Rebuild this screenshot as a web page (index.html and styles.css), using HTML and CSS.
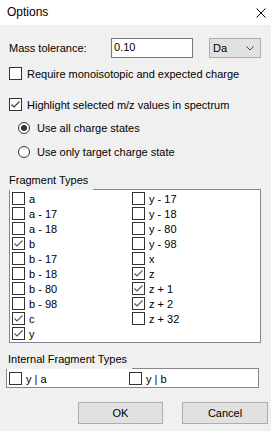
FILE: index.html
```html
<!DOCTYPE html>
<html>
<head>
<meta charset="utf-8">
<link rel="stylesheet" href="styles.css">
</head>
<body>
<div class="window">
  <div class="titlebar">
    <span class="title">Options</span>
    <svg class="close" width="10" height="10" viewBox="0 0 10 10"><path d="M0.5 0.5 L9.5 9.5 M9.5 0.5 L0.5 9.5" stroke="#000" stroke-width="1" fill="none"/></svg>
  </div>
  <div class="content">
    <div class="mass-row">
      <span class="mass-label">Mass tolerance:</span>
      <div class="textbox">0.10</div>
      <div class="combo"><span>Da</span><svg width="8" height="5" viewBox="0 0 8 5"><path d="M0.5 0.5 L4 4 L7.5 0.5" stroke="#444" fill="none"/></svg></div>
    </div>
    <div class="opt-row require"><span class="cb"></span><span>Require monoisotopic and expected charge</span></div>
    <div class="opt-row highlight"><span class="cb on"><svg width="11" height="11" viewBox="0 0 11 11"><path d="M1.5 5.5 L4 8 L9.5 2.5" stroke="#333" stroke-width="1.2" fill="none"/></svg></span><span>Highlight selected m/z values in spectrum</span></div>
    <div class="radio-row r1"><span class="rb on"></span><span>Use all charge states</span></div>
    <div class="radio-row r2"><span class="rb"></span><span>Use only target charge state</span></div>

    <div class="group frag">
      <div class="group-head"><span class="group-label">Fragment Types</span><span class="group-line"></span></div>
      <div class="group-box frag-list">
        <div class="item"><span class="cb"></span>a</div>
        <div class="item"><span class="cb"></span>a - 17</div>
        <div class="item"><span class="cb"></span>a - 18</div>
        <div class="item"><span class="cb on"><svg width="11" height="11" viewBox="0 0 11 11"><path d="M1.5 5.5 L4 8 L9.5 2.5" stroke="#555" stroke-width="1.1" fill="none"/></svg></span>b</div>
        <div class="item"><span class="cb"></span>b - 17</div>
        <div class="item"><span class="cb"></span>b - 18</div>
        <div class="item"><span class="cb"></span>b - 80</div>
        <div class="item"><span class="cb"></span>b - 98</div>
        <div class="item"><span class="cb on"><svg width="11" height="11" viewBox="0 0 11 11"><path d="M1.5 5.5 L4 8 L9.5 2.5" stroke="#555" stroke-width="1.1" fill="none"/></svg></span>c</div>
        <div class="item"><span class="cb on"><svg width="11" height="11" viewBox="0 0 11 11"><path d="M1.5 5.5 L4 8 L9.5 2.5" stroke="#555" stroke-width="1.1" fill="none"/></svg></span>y</div>
        <div class="item"><span class="cb"></span>y - 17</div>
        <div class="item"><span class="cb"></span>y - 18</div>
        <div class="item"><span class="cb"></span>y - 80</div>
        <div class="item"><span class="cb"></span>y - 98</div>
        <div class="item"><span class="cb"></span>x</div>
        <div class="item"><span class="cb on"><svg width="11" height="11" viewBox="0 0 11 11"><path d="M1.5 5.5 L4 8 L9.5 2.5" stroke="#555" stroke-width="1.1" fill="none"/></svg></span>z</div>
        <div class="item"><span class="cb on"><svg width="11" height="11" viewBox="0 0 11 11"><path d="M1.5 5.5 L4 8 L9.5 2.5" stroke="#555" stroke-width="1.1" fill="none"/></svg></span>z + 1</div>
        <div class="item"><span class="cb on"><svg width="11" height="11" viewBox="0 0 11 11"><path d="M1.5 5.5 L4 8 L9.5 2.5" stroke="#555" stroke-width="1.1" fill="none"/></svg></span>z + 2</div>
        <div class="item"><span class="cb"></span>z + 32</div>
      </div>
    </div>

    <div class="group internal">
      <div class="group-head"><span class="group-label">Internal Fragment Types</span><span class="group-line"></span></div>
      <div class="group-box internal-list">
        <div class="item"><span class="cb"></span>y | a</div>
        <div class="item"><span class="cb"></span>y | b</div>
      </div>
    </div>

    <div class="buttons">
      <div class="btn ok">OK</div>
      <div class="btn cancel">Cancel</div>
    </div>
  </div>
</div>
</body>
</html>
```

FILE: styles.css
```css
html, body {
  margin: 0;
  padding: 0;
}
body {
  width: 271px;
  height: 431px;
  background: #f0f0f0;
  font-family: "Liberation Sans", Arial, sans-serif;
  font-size: 11px;
  color: #000;
  overflow: hidden;
}
.window {
  width: 271px;
  height: 431px;
  display: flex;
  flex-direction: column;
}
.titlebar {
  height: 25px;
  background: #fff;
  display: flex;
  align-items: center;
  justify-content: space-between;
  padding: 0 5px 1px 7px;
  box-sizing: border-box;
}
.title {
  font-size: 12px;
  line-height: 14px;
}
.close {
  display: block;
  margin-top: 1px;
}
.content {
  display: flex;
  flex-direction: column;
}
.mass-row {
  margin-top: 13px;
  height: 20px;
  display: flex;
  align-items: center;
  padding-left: 9px;
}
.mass-label {
  width: 102px;
}
.textbox {
  width: 82px;
  height: 20px;
  box-sizing: border-box;
  border: 1px solid #7a7a7a;
  background: #fff;
  padding-left: 2px;
  line-height: 17px;
}
.combo {
  margin-left: 16px;
  width: 52px;
  height: 20px;
  box-sizing: border-box;
  border: 1px solid #adadad;
  background: #e1e1e1;
  display: flex;
  align-items: center;
  justify-content: space-between;
  padding: 0 6px 0 3px;
}
.combo svg {
  display: block;
}
.cb {
  width: 13px;
  height: 13px;
  box-sizing: border-box;
  border: 1px solid #333;
  background: #fff;
  flex: none;
  display: flex;
  align-items: center;
  justify-content: center;
}
.cb svg {
  display: block;
}
.opt-row {
  display: flex;
  align-items: center;
  height: 13px;
  padding-left: 9px;
  gap: 5px;
}
.require {
  margin-top: 9px;
}
.highlight {
  margin-top: 18px;
}
.radio-row {
  display: flex;
  align-items: center;
  height: 12px;
  padding-left: 18px;
  gap: 7px;
}
.r1 {
  margin-top: 11px;
}
.r2 {
  margin-top: 12px;
}
.rb {
  width: 12px;
  height: 12px;
  box-sizing: border-box;
  border: 1px solid #333;
  border-radius: 50%;
  background: #fff;
  flex: none;
  display: flex;
  align-items: center;
  justify-content: center;
}
.rb.on::after {
  content: "";
  width: 6px;
  height: 6px;
  border-radius: 50%;
  background: #333;
}
.group {
  display: flex;
  flex-direction: column;
}
.group-head {
  display: flex;
  align-items: stretch;
  height: 18px;
}
.group-label {
  background: #f0f0f0;
  line-height: 17px;
}
.group-line {
  flex: 1;
  border-bottom: 1px solid #828790;
}
.group-box {
  background: #fff;
  border: 1px solid #828790;
  border-top: none;
}
.frag {
  margin-top: 14px;
  margin-left: 9px;
  width: 252px;
}
.frag .group-label {
  width: 84px;
}
.frag-list {
  display: grid;
  grid-auto-flow: column;
  grid-template-rows: repeat(10, 15px);
  grid-template-columns: 120px 120px;
  padding: 1px 0 1px 2px;
}
.item {
  display: flex;
  align-items: center;
  gap: 4px;
  white-space: nowrap;
}
.internal {
  margin-top: 8px;
  margin-left: 6px;
  width: 253px;
}
.internal .group-label {
  width: 126px;
  padding-left: 2px;
  box-sizing: border-box;
}
.internal-list {
  display: grid;
  grid-template-columns: 120px 120px;
  height: 19px;
  box-sizing: border-box;
  padding: 2px 0 1px 2px;
}
.buttons {
  display: flex;
  margin-top: 14px;
  padding-left: 78px;
  gap: 19px;
}
.btn {
  height: 22px;
  box-sizing: border-box;
  border: 1px solid #adadad;
  background: #e1e1e1;
  display: flex;
  align-items: center;
  justify-content: center;
}
.ok {
  width: 85px;
}
.cancel {
  width: 86px;
}
```
